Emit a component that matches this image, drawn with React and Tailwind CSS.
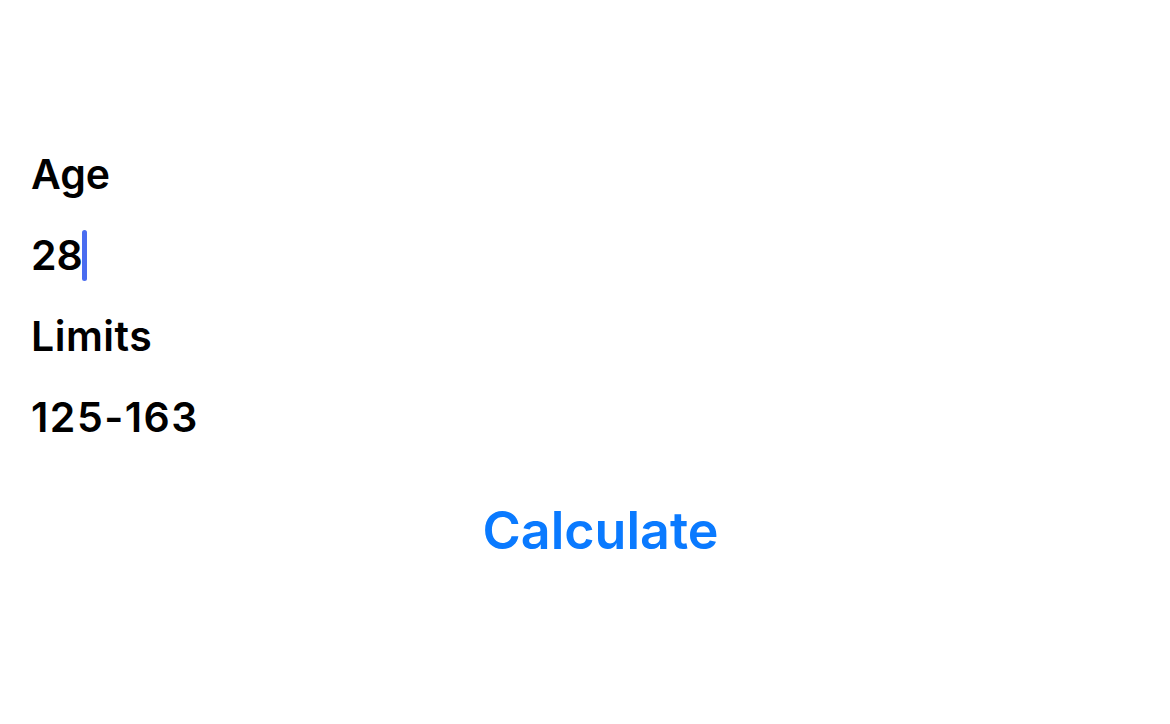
export default function App() {
  return (
    <div
      className="w-[1170px] h-[724px] bg-white text-black"
      style={{ fontFamily: 'Inter, "Noto Sans", sans-serif' }}
    >
      <div className="pl-[31px] pt-[150px] flex flex-col">
        <div className="h-[81px] flex items-start">
          <span className="text-[41px] leading-[48px] font-semibold">Age</span>
        </div>
        <div className="h-[81px] flex items-start">
          <span className="text-[41px] leading-[48px] font-semibold">28</span>
          <span className="ml-[-1px] mt-[-1px] w-[5px] h-[51px] rounded-full bg-[#4a6cf0]" />
        </div>
        <div className="h-[81px] flex items-start">
          <span className="text-[41px] leading-[48px] font-semibold tracking-[0.5px]">Limits</span>
        </div>
        <div className="h-[81px] flex items-start">
          <span className="text-[41px] leading-[48px] font-semibold tracking-[1.5px]">125-163</span>
        </div>
        <div className="flex justify-center mt-[25px]">
          <button className="text-[52px] leading-[64px] font-semibold text-[#0a7aff]">
            Calculate
          </button>
        </div>
      </div>
    </div>
  );
}
